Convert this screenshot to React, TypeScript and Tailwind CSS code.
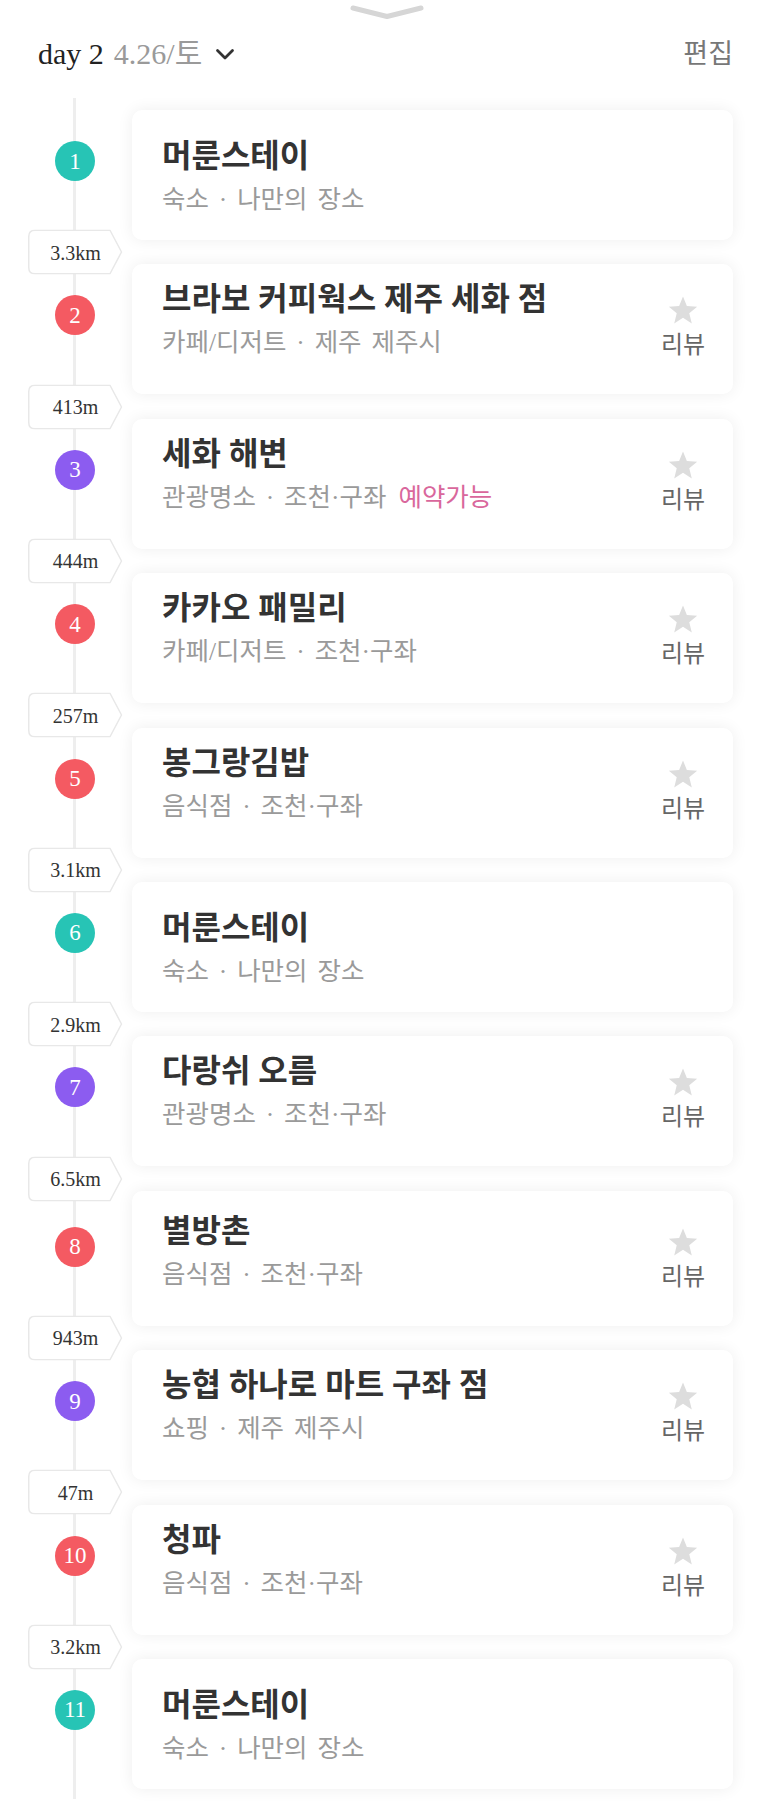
import { Fragment } from "react"

type Stop = {
  no: number
  name: string
  desc: string
  badge?: string
  color: string
  review: boolean
  dist?: string
  extra?: number
}

const TEAL = "bg-[#27c4b5]"
const RED = "bg-[#f45a62]"
const PURPLE = "bg-[#8c5cf0]"

const stops: Stop[] = [
  { no: 1, name: "머룬스테이", desc: "숙소 · 나만의 장소", color: TEAL, review: false },
  { no: 2, name: "브라보 커피웍스 제주 세화 점", desc: "카페/디저트 · 제주 제주시", color: RED, review: true, dist: "3.3km" },
  { no: 3, name: "세화 해변", desc: "관광명소 · 조천·구좌", badge: "예약가능", color: PURPLE, review: true, dist: "413m" },
  { no: 4, name: "카카오 패밀리", desc: "카페/디저트 · 조천·구좌", color: RED, review: true, dist: "444m" },
  { no: 5, name: "봉그랑김밥", desc: "음식점 · 조천·구좌", color: RED, review: true, dist: "257m" },
  { no: 6, name: "머룬스테이", desc: "숙소 · 나만의 장소", color: TEAL, review: false, dist: "3.1km" },
  { no: 7, name: "다랑쉬 오름", desc: "관광명소 · 조천·구좌", color: PURPLE, review: true, dist: "2.9km" },
  { no: 8, name: "별방촌", desc: "음식점 · 조천·구좌", color: RED, review: true, dist: "6.5km", extra: 5 },
  { no: 9, name: "농협 하나로 마트 구좌 점", desc: "쇼핑 · 제주 제주시", color: PURPLE, review: true, dist: "943m" },
  { no: 10, name: "청파", desc: "음식점 · 조천·구좌", color: RED, review: true, dist: "47m" },
  { no: 11, name: "머룬스테이", desc: "숙소 · 나만의 장소", color: TEAL, review: false, dist: "3.2km" },
]

function DistanceBadge({ label }: { label: string }) {
  return (
    <div className="absolute left-[28px] top-1/2 z-10 flex h-[45px] w-[95px] -translate-y-1/2 items-center justify-center">
      <svg className="absolute inset-0" width="95" height="45" viewBox="0 0 95 45">
        <path
          d="M7 0.75 H82 L93.5 22.5 L82 44.25 H7 Q0.75 44.25 0.75 38 V7 Q0.75 0.75 7 0.75 Z"
          fill="#ffffff"
          stroke="#e8e8e8"
          strokeWidth="1.5"
          strokeLinejoin="round"
        />
      </svg>
      <span className="relative text-[20px] leading-none text-[#333]">{label}</span>
    </div>
  )
}

function Star() {
  return (
    <svg width="32" height="31" viewBox="0 0 24 23">
      <polygon
        points="12,1 14.9,8.2 22.6,8.7 16.7,13.6 18.6,21.2 12,17 5.4,21.2 7.3,13.6 1.4,8.7 9.1,8.2"
        fill="#dddddd"
      />
    </svg>
  )
}

function StopRow({ stop }: { stop: Stop }) {
  const extra = stop.extra ?? 0
  return (
    <div className="flex">
      <div className="w-[132px] pl-[55px]" style={{ paddingTop: 31 + extra }}>
        <div
          className={`relative z-10 flex h-[40px] w-[40px] items-center justify-center rounded-full text-[23px] leading-none text-white ${stop.color}`}
        >
          {stop.no}
        </div>
      </div>
      <div
        className="flex w-[601px] rounded-[10px] bg-white shadow-[0_0_16px_rgba(0,0,0,0.07)]"
        style={{ height: 130 + extra }}
      >
        <div
          className="flex-1 pl-[30px]"
          style={{ paddingTop: (stop.review ? 15 : 26) + extra }}
        >
          <div className="text-[32px] font-semibold leading-[40px] text-[#333]">{stop.name}</div>
          <div className="mt-[6px] text-[25.5px] leading-[36px] text-[#9a9a9a] [word-spacing:3.5px]">
            {stop.desc}
            {stop.badge && <span className="ml-[12px] text-[#d9679c]">{stop.badge}</span>}
          </div>
        </div>
        {stop.review && (
          <div
            className="mr-[26px] flex w-[48px] flex-col items-center"
            style={{ paddingTop: 31 + extra }}
          >
            <Star />
            <span className="mt-[5px] text-[24px] leading-[28px] text-[#666]">리뷰</span>
          </div>
        )}
      </div>
    </div>
  )
}

export default function App() {
  return (
    <main
      className="min-h-screen w-full bg-white"
      style={{ fontFamily: '"Liberation Serif", "Noto Sans CJK KR", serif' }}
    >
      <div className="flex h-[30px] justify-center pt-[4px]">
        <svg width="76" height="16" viewBox="0 0 76 16">
          <polyline
            points="4,4 38,12.5 72,4"
            fill="none"
            stroke="#d6d6d6"
            strokeWidth="5"
            strokeLinecap="round"
            strokeLinejoin="round"
          />
        </svg>
      </div>

      <div className="mt-[6px] flex h-[36px] items-center justify-between pl-[38px] pr-[40px]">
        <div className="flex items-center text-[30px] leading-[36px]">
          <span className="text-[#222]">day 2</span>
          <span className="ml-[10px] text-[#9a9a9a]">4.26/토</span>
          <svg className="ml-[13px]" width="20" height="13" viewBox="0 0 20 13">
            <polyline
              points="2.5,2.5 10,10 17.5,2.5"
              fill="none"
              stroke="#333"
              strokeWidth="2.8"
              strokeLinecap="round"
              strokeLinejoin="round"
            />
          </svg>
        </div>
        <span className="text-[27px] leading-[36px] text-[#777]">편집</span>
      </div>

      <div className="relative mt-[38px] pb-[28px]">
        <div className="absolute bottom-[18px] left-[73px] top-[-12px] w-[3px] bg-[#eeeeee]" />
        {stops.map((stop) => (
          <Fragment key={stop.no}>
            {stop.dist && (
              <div className="relative h-[24.4px]">
                <DistanceBadge label={stop.dist} />
              </div>
            )}
            <StopRow stop={stop} />
          </Fragment>
        ))}
      </div>
    </main>
  )
}
